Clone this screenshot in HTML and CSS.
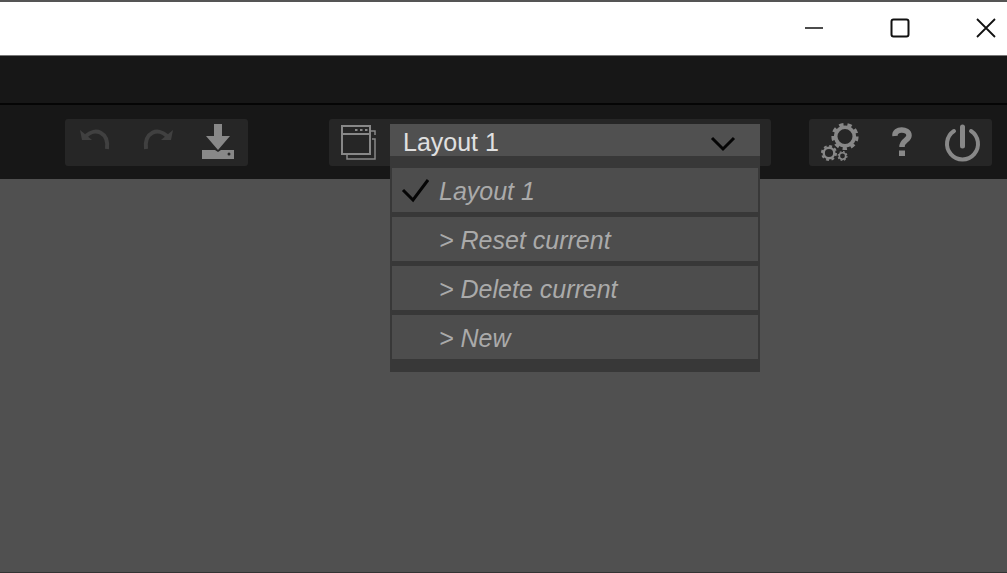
FILE: index.html
```
<!DOCTYPE html>
<html lang="en">
<head>
    <meta charset="UTF-8">
    <meta name="viewport" content="width=device-width, initial-scale=1.0">
    <title>Layout 1</title>
    <link rel="stylesheet" href="styles.css">
</head>
<body>
    <header class="titlebar">
        <button class="window-button" aria-label="Minimize">
            <svg width="22" height="22" viewBox="0 0 22 22"><path d="M2 11H20" stroke-width="1.5"/></svg>
        </button>
        <button class="window-button" aria-label="Maximize">
            <svg width="22" height="22" viewBox="0 0 22 22"><rect x="2.5" y="2.5" width="17" height="17" rx="2" stroke-width="2"/></svg>
        </button>
        <button class="window-button" aria-label="Close">
            <svg width="22" height="22" viewBox="0 0 22 22"><path d="M2 2L20 20M20 2L2 20" stroke-width="1.8"/></svg>
        </button>
    </header>
    <div class="menubar"></div>

    <div class="toolbar">
        <div class="group">
            <button class="tool" aria-label="Undo" disabled>
                <svg width="36" height="36" viewBox="0 0 36 36">
                    <path d="M8 12C17 3 31 8 29 25" fill="none" stroke="currentColor" stroke-width="4"/>
                    <path d="M2 6L4 16H14Z" fill="currentColor"/>
                </svg>
            </button>
            <button class="tool" aria-label="Redo" disabled>
                <svg width="36" height="36" viewBox="0 0 36 36">
                    <path d="M28 12C19 3 5 8 7 25" fill="none" stroke="currentColor" stroke-width="4"/>
                    <path d="M34 6L32 16H22Z" fill="currentColor"/>
                </svg>
            </button>
            <button class="tool" aria-label="Save">
                <svg width="36" height="36" viewBox="0 0 36 36">
                    <path d="M14 0H22V12H30L18 26L6 12H14Z" fill="currentColor"/>
                    <path d="M2 26H15L18 28L21 26H34V35H2Z" fill="currentColor"/>
                    <circle cx="29" cy="30" r="1.5" fill="#262626"/>
                </svg>
            </button>
        </div>

        <div class="group layouts">
            <button class="tool" aria-label="Layouts">
                <svg width="36" height="36" viewBox="0 0 36 36" fill="none" stroke="currentColor">
                    <rect x="1" y="2" width="28" height="28" stroke-width="2"/>
                    <path d="M1 10H29" stroke-width="2"/>
                    <path d="M14 6H16.500M19 6H21.500M24 6H26.500" stroke-width="2"/>
                    <path d="M30 7H34V11M31 15H34V35H6V31" stroke-width="1.500"/>
                </svg>
            </button>
            <div class="picker">
                <select class="picker-value" aria-label="Current layout">
                    <option>Layout 1</option>
                </select>
                <svg class="chevron" width="26" height="16" viewBox="0 0 26 16"><path d="M2 2L13 13L24 2"/></svg>
                <div class="picker-menu">
                    <button class="picker-item">
                        <svg class="check" width="28" height="24" viewBox="0 0 28 24"><path d="M2 11L12 21L27 1"/></svg>
                        Layout 1
                    </button>
                    <button class="picker-item">&gt; Reset current</button>
                    <button class="picker-item">&gt; Delete current</button>
                    <button class="picker-item">&gt; New</button>
                </div>
            </div>
        </div>

        <div class="group system">
            <button class="tool" aria-label="Settings">
                <svg width="40" height="40" viewBox="0 0 40 40" fill="none" stroke="currentColor">
                    <circle cx="25" cy="14.500" r="9.300" stroke-width="3.600"/>
                    <circle cx="25" cy="14.500" r="12" stroke-width="3.200" stroke-dasharray="4.400 3.978"/>
                    <circle cx="9" cy="31" r="5.300" stroke-width="2.400"/>
                    <circle cx="9" cy="31" r="7" stroke-width="2" stroke-dasharray="2.900 2.598"/>
                    <circle cx="22.500" cy="34" r="3.200" stroke-width="1.600"/>
                    <circle cx="22.500" cy="34" r="4.400" stroke-width="1.200" stroke-dasharray="1.800 1.656"/>
                </svg>
            </button>
            <button class="tool" aria-label="Help">
                <svg width="40" height="40" viewBox="0 0 40 40" fill="none" stroke="currentColor">
                    <path d="M14 14C13 6 28 6 28 13.500C28 18.500 21 18 21 25" stroke-width="5.500"/>
                    <path d="M21 28.500V34" stroke-width="6"/>
                </svg>
            </button>
            <button class="tool" aria-label="Power">
                <svg width="40" height="40" viewBox="0 0 40 40" fill="none" stroke="currentColor" stroke-linecap="round">
                    <path d="M12 9A15.500 15.500 0 1 0 29 9" stroke-width="4"/>
                    <path d="M20.500 5V24" stroke-width="5"/>
                </svg>
            </button>
        </div>
    </div>
    <main class="workspace"></main>
</body>
</html>
```
FILE: styles.css
```
* {
    box-sizing: border-box;
}

body {
    display: flex;
    flex-direction: column;
    min-height: 100vh;
    margin: 0;
    background-color: #505050;
    font-family: "Liberation Sans", Arial, sans-serif;
    font-size: 25px;
}

button,
select {
    margin: 0;
    padding: 0;
    border: 0;
    background: none;
    color: inherit;
    font: inherit;
}

svg {
    display: block;
}

.titlebar {
    display: flex;
    justify-content: flex-end;
    align-items: center;
    gap: 64px;
    height: 56px;
    padding: 0 10px 2px 0;
    border-top: 2px solid #555;
    border-bottom: 1px solid #777;
    background-color: #fff;
}

.window-button svg {
    fill: none;
    stroke: #111;
}

.menubar {
    height: 49px;
    border-bottom: 2px solid #050505;
    background-color: #171717;
}

.toolbar {
    display: flex;
    align-items: center;
    height: 74px;
    padding: 0 15px 0 65px;
    background-color: #171717;
}

.group {
    display: flex;
    align-items: center;
    justify-content: space-around;
    width: 183px;
    height: 47px;
    border-radius: 3px;
    background-color: #262626;
}

.tool {
    color: #888;
}

.tool:disabled {
    color: #404040;
}

.layouts {
    flex: 1;
    justify-content: flex-start;
    gap: 13px;
    margin: 0 38px 0 81px;
    padding: 0 11px 0 12px;
}

.picker {
    position: relative;
    flex: 1;
    height: 37px;
    background-color: #505050;
}

.picker-value {
    width: 100%;
    height: 37px;
    padding-left: 13px;
    appearance: none;
    color: #e0e0e0;
}

.chevron {
    position: absolute;
    top: 12px;
    right: 24px;
    fill: none;
    stroke: #050505;
    stroke-width: 3;
    pointer-events: none;
}

.picker-menu {
    position: absolute;
    top: 32px;
    left: 0;
    right: 0;
    display: flex;
    flex-direction: column;
    gap: 5px;
    padding: 12px 2px 13px;
    background-color: #383838;
}

.picker-item {
    position: relative;
    height: 44px;
    padding: 4px 0 0 47px;
    background-color: #4d4d4d;
    color: #aaa;
    font-style: italic;
    text-align: left;
}

.check {
    position: absolute;
    top: 11px;
    left: 9px;
    fill: none;
    stroke: #050505;
    stroke-width: 3;
}

.workspace {
    flex: 1;
    border-bottom: 1px solid #333;
}
```
